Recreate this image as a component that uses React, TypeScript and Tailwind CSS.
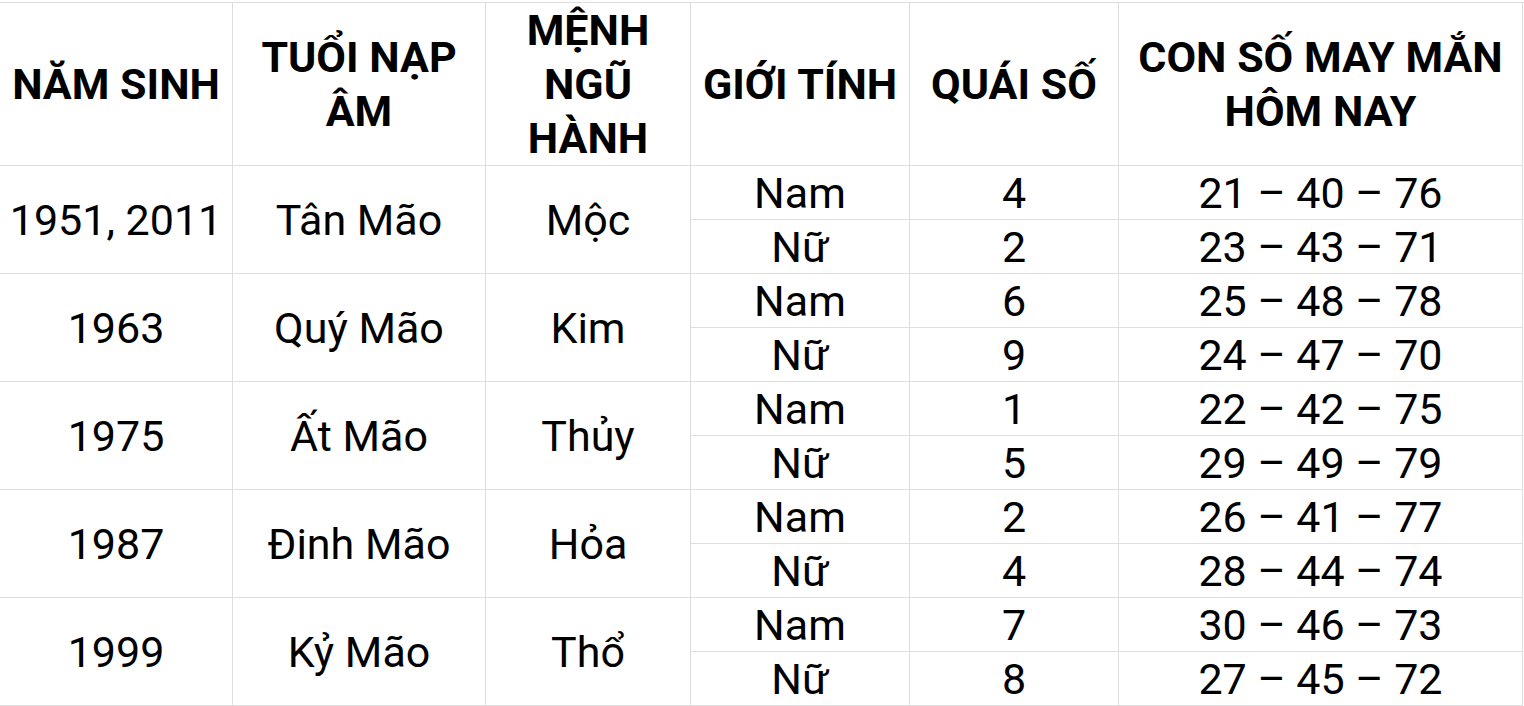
const rows = [
  { year: '1951, 2011', tuoi: 'Tân Mão', menh: 'Mộc', nam: ['4', '21 – 40 – 76'], nu: ['2', '23 – 43 – 71'] },
  { year: '1963', tuoi: 'Quý Mão', menh: 'Kim', nam: ['6', '25 – 48 – 78'], nu: ['9', '24 – 47 – 70'] },
  { year: '1975', tuoi: 'Ất Mão', menh: 'Thủy', nam: ['1', '22 – 42 – 75'], nu: ['5', '29 – 49 – 79'] },
  { year: '1987', tuoi: 'Đinh Mão', menh: 'Hỏa', nam: ['2', '26 – 41 – 77'], nu: ['4', '28 – 44 – 74'] },
  { year: '1999', tuoi: 'Kỷ Mão', menh: 'Thổ', nam: ['7', '30 – 46 – 73'], nu: ['8', '27 – 45 – 72'] },
];

const headers = ['NĂM SINH', 'TUỔI NẠP ÂM', 'MỆNH NGŨ HÀNH', 'GIỚI TÍNH', 'QUÁI SỐ', 'CON SỐ MAY MẮN HÔM NAY'];

const cell = 'flex items-center justify-center text-center border-r border-b border-[#dedede] px-1';

export default function App() {
  return (
    <div className="bg-white w-[1524px] h-[706px] overflow-hidden pt-[2px]" style={{ fontFamily: 'Roboto, "Noto Sans", sans-serif' }}>
      <div className="grid grid-cols-[233px_253px_205px_219px_209px_404px] grid-rows-[163px_repeat(10,54px)] border-t border-[#dedede] text-black text-[43px] leading-[54px]">
        {headers.map((h) => (
          <div key={h} className={`${cell} font-bold`}>{h}</div>
        ))}
        {rows.map((r) => (
          <div key={r.year} className="contents">
            <div className={`${cell} row-span-2`}>{r.year}</div>
            <div className={`${cell} row-span-2`}>{r.tuoi}</div>
            <div className={`${cell} row-span-2`}>{r.menh}</div>
            <div className={cell}>Nam</div>
            <div className={cell}>{r.nam[0]}</div>
            <div className={cell}>{r.nam[1]}</div>
            <div className={cell}>Nữ</div>
            <div className={cell}>{r.nu[0]}</div>
            <div className={cell}>{r.nu[1]}</div>
          </div>
        ))}
      </div>
    </div>
  );
}
